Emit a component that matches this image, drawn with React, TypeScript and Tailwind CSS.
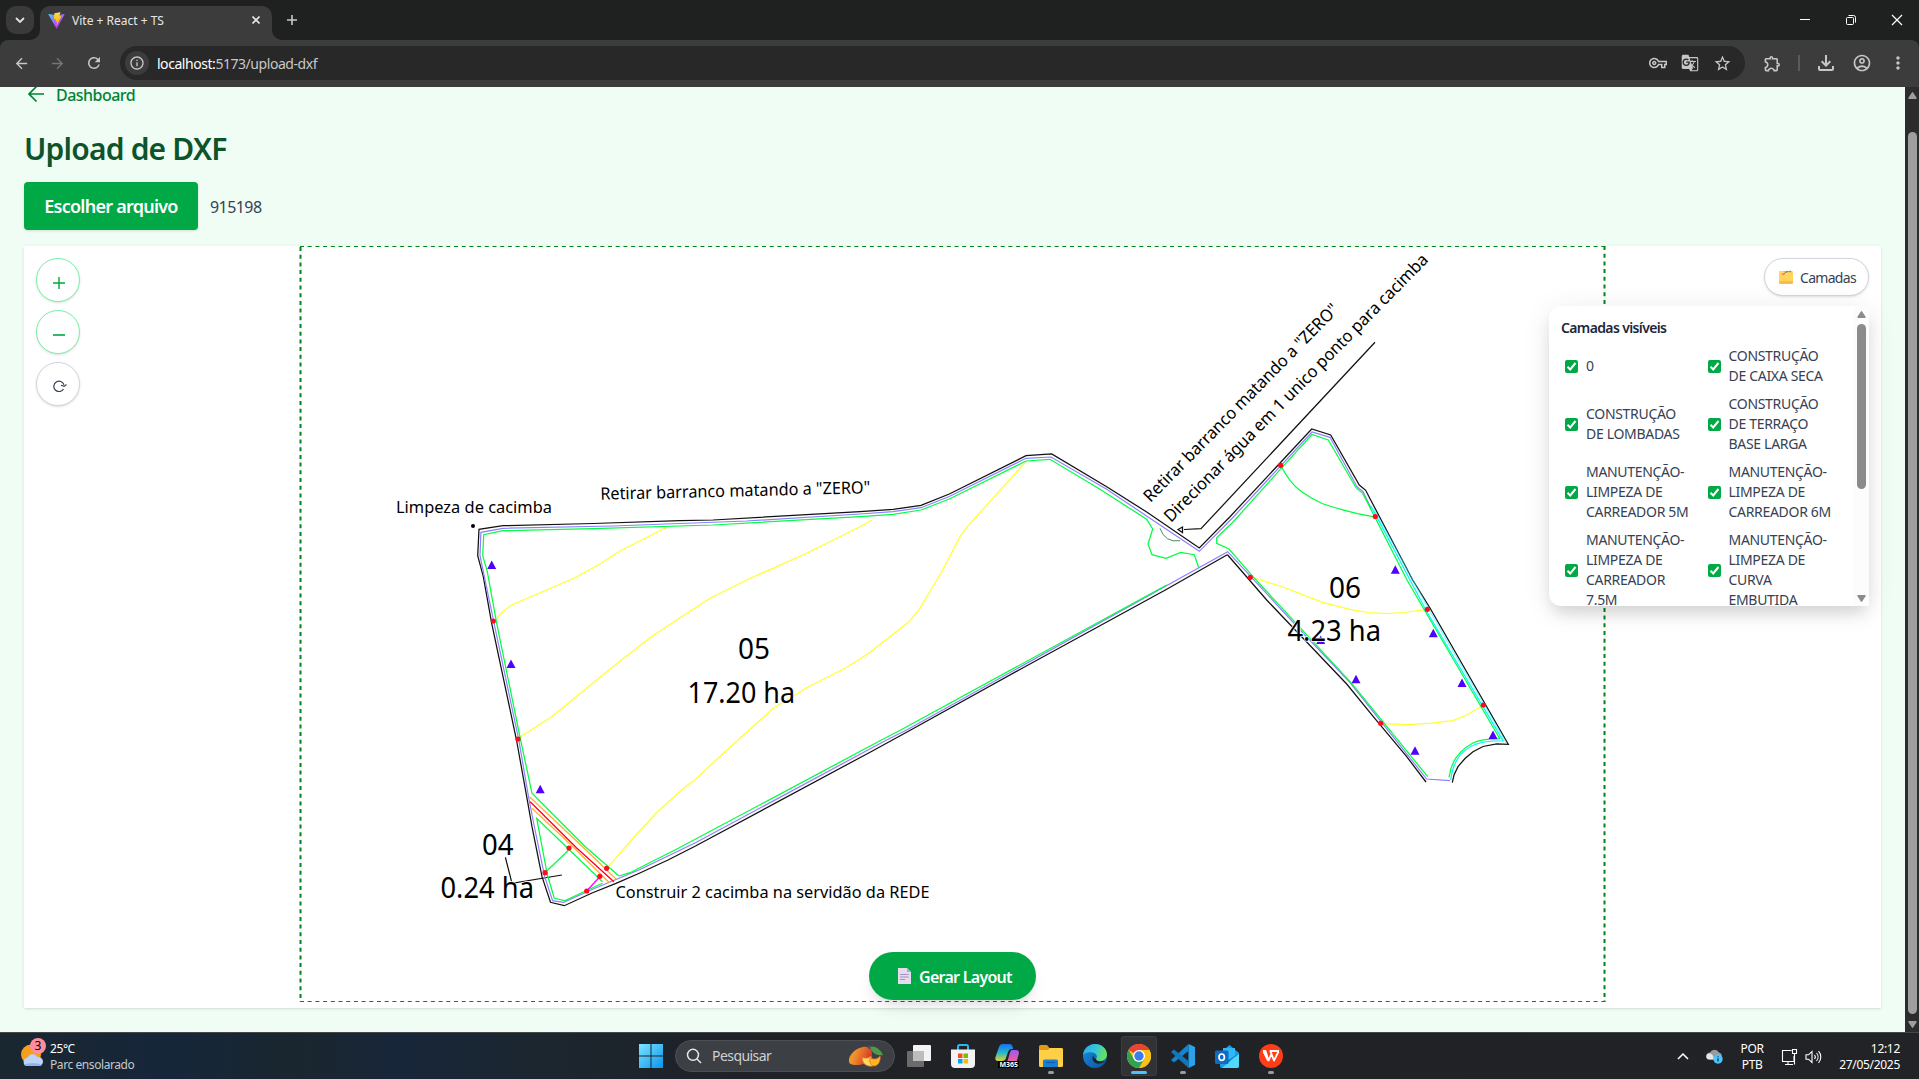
import React from "react";
import {
  MdArrowBack,
  MdArrowForward,
  MdRefresh,
  MdInfoOutline,
  MdOutlineVpnKey,
  MdGTranslate,
  MdStarOutline,
  MdOutlineExtension,
  MdOutlineFileDownload,
  MdOutlineAccountCircle,
  MdMoreVert,
} from "react-icons/md";

type Pt = [number, number];
const poly = (p: Pt[]) => p.map(([x, y]) => `${x},${y}`).join(" ");

/* ---------- Browser chrome ---------- */

function ViteLogo() {
  return (
    <svg width="17" height="17" viewBox="0 0 410 404" className="shrink-0">
      <defs>
        <linearGradient id="v1" x1="6" y1="33" x2="235" y2="344" gradientUnits="userSpaceOnUse">
          <stop stopColor="#41D1FF" />
          <stop offset="1" stopColor="#BD34FE" />
        </linearGradient>
        <linearGradient id="v2" x1="194" y1="9" x2="236" y2="293" gradientUnits="userSpaceOnUse">
          <stop stopColor="#FFEA83" />
          <stop offset="0.1" stopColor="#FFDD35" />
          <stop offset="1" stopColor="#FFA800" />
        </linearGradient>
      </defs>
      <path fill="url(#v1)" d="M399.6 59.5 215.6 388.5a10.5 10.5 0 0 1-17.9.1L10.6 59.5c-4.4-7.6 2.1-16.9 10.8-15.3l184.1 32.9c1.200.2 2.400.2 3.600 0L389.400 44.200c8.600-1.600 15.100 7.600 10.200 15.300Z" />
      <path fill="url(#v2)" d="M293 1.600 156.900 28.200a5 5 0 0 0-4 4.600l-8.400 141.400a5 5 0 0 0 6.100 5.200l37.900-8.700a5 5 0 0 1 6 5.900l-11.300 55.100a5 5 0 0 0 6.300 5.800l23.400-7.100a5 5 0 0 1 6.300 5.800l-17.900 86.600c-1.100 5.400 6.100 8.400 9.100 3.700l2-3.100 110.900-221.300a5 5 0 0 0-5.400-7.100l-39 7.500a5 5 0 0 1-5.700-6.300L298.600 7.900a5 5 0 0 0-5.600-6.300Z" />
    </svg>
  );
}

function TabStrip() {
  return (
    <div className="relative flex h-10 items-start bg-[#1f2120] pl-1.5">
      <div className="mt-1.5 flex size-7 items-center justify-center rounded-[10px] bg-[#3a3a3a]">
        <svg width="10" height="6" viewBox="0 0 10 6" fill="none" stroke="#e3e3e3" strokeWidth="1.8">
          <path d="M1 1l4 4 4-4" />
        </svg>
      </div>
      <div className="relative mt-1.5 ml-1.5 flex h-[34px] w-[232px] items-center rounded-t-[10px] bg-[#3c3c3c] pl-2">
        <svg className="absolute -left-2.5 bottom-0" width="10" height="10" viewBox="0 0 10 10">
          <path d="M10 0v10H0A10 10 0 0 0 10 0Z" fill="#3c3c3c" />
        </svg>
        <svg className="absolute -right-2.5 bottom-0" width="10" height="10" viewBox="0 0 10 10">
          <path d="M0 0v10h10A10 10 0 0 1 0 0Z" fill="#3c3c3c" />
        </svg>
        <div className="-mt-1.5 flex w-full items-center">
          <ViteLogo />
          <span className="ml-[7px] pt-px text-xs text-[#e6e6e6]">Vite + React + TS</span>
          <svg className="mr-3 ml-auto" width="8" height="8" viewBox="0 0 8 8" stroke="#e3e3e3" strokeWidth="1.6">
            <path d="M.5.5l7 7M7.500.5l-7 7" />
          </svg>
        </div>
      </div>
      <svg className="mt-[15px] ml-[15px]" width="10" height="10" viewBox="0 0 10 10" stroke="#c9c9c9" strokeWidth="1.6">
        <path d="M5 0v10M0 5h10" />
      </svg>
      <div className="mt-[14px] mr-[16px] ml-auto flex items-center gap-[34px]">
        <svg width="12" height="12" viewBox="0 0 12 12" stroke="#fff" strokeWidth="1">
          <path d="M1 5.500h10" />
        </svg>
        <svg width="12" height="12" viewBox="0 0 12 12" fill="none" stroke="#fff" strokeWidth="1">
          <rect x="1.500" y="3.500" width="7" height="7" rx="1" />
          <path d="M3.500 1.500h5a2 2 0 0 1 2 2v5" />
        </svg>
        <svg width="12" height="12" viewBox="0 0 12 12" stroke="#fff" strokeWidth="1.200">
          <path d="M1 1l10 10M11 1L1 11" />
        </svg>
      </div>
    </div>
  );
}

function Toolbar() {
  return (
    <div className="h-[47px] bg-[#1f2120]">
      <div className="flex h-full items-center rounded-t-[8px] bg-[#3c3c3c] pr-[11px] pb-[1px] pl-[13px] text-[#c7c7c7]">
        <MdArrowBack size={17} />
        <MdArrowForward size={17} className="ml-[19px] text-[#757575]" />
        <MdRefresh size={18} className="ml-[19px]" />
        <div className="ml-[17px] flex h-[34px] w-[1626px] items-center rounded-full bg-[#282828] pr-[13px] pl-[5px]">
          <div className="flex size-6 items-center justify-center rounded-full bg-[#3c3c3c]">
            <MdInfoOutline size={16} />
          </div>
          <div className="ml-2 pt-px text-sm tracking-[-0.032em]">
            <span className="text-white">localhost:</span>
            <span>5173/upload-dxf</span>
          </div>
          <MdOutlineVpnKey size={18} className="ml-auto" />
          <MdGTranslate size={18} className="ml-[14px]" />
          <MdStarOutline size={19} className="ml-[14px]" />
        </div>
        <MdOutlineExtension size={19} className="ml-[18px]" />
        <div className="ml-[16px] h-4 w-[2px] bg-[#5b5b5b]" />
        <MdOutlineFileDownload size={24} className="ml-[14px]" />
        <MdOutlineAccountCircle size={20} className="ml-[14px]" />
        <MdMoreVert size={20} className="ml-[16px]" />
      </div>
    </div>
  );
}

/* ---------- Map drawing ---------- */

const GREEN = "#00ff40";
const PURPLE = "#8f7fff";

const blackA: Pt[] = [[1227.7, 554.500], [1166.700, 589.300], [1019, 670], [910.700, 730], [871, 751.700], [695.500, 846], [668, 860], [640.400, 872.700], [616, 883.300], [592, 893], [564.300, 905.700], [550.500, 902.300], [542, 876.700], [532, 826.700], [526.700, 796.700], [516.500, 740], [491.700, 623.300], [483.300, 576.700], [477.700, 555.700], [479, 529.300], [503, 525.700], [593, 523.500], [680, 520.700], [713, 520], [860, 511.700], [893.300, 509.300], [921, 505.300], [949.300, 494], [1026, 455.700], [1051.700, 454], [1106.700, 486.700], [1146.700, 512], [1199.300, 548], [1230, 516.700], [1311.700, 429], [1330.700, 435], [1359.300, 485], [1365.700, 490.300], [1370.700, 500], [1412.700, 580], [1430, 608], [1508.300, 744.300], [1496.700, 744], [1483, 746.500], [1473, 751.700], [1465, 758.500], [1458, 766.700], [1454, 775], [1452.300, 782.700]];
const blackB: Pt[] = [[1227.700, 555], [1266.700, 600], [1300, 635], [1346.700, 684], [1373.300, 716.700], [1406.700, 756.700], [1426, 782]];
const purpleA: Pt[] = [[1450, 780.700], [1426.700, 779], [1350, 682.700], [1304, 634], [1227.700, 551.700], [906.700, 730], [886.600, 740], [695.500, 842.700], [640, 869.500], [613, 880.700], [592, 889.500], [563.600, 902.300], [552.600, 900.700], [544.700, 876.700], [533.600, 823], [528.500, 796.700], [518.800, 740], [494, 623], [480, 555.700], [480.900, 532.300], [503, 528.300], [613, 526], [746.700, 521], [860, 514], [893, 511.700], [921, 507.700], [949.300, 496.500], [1026, 458.300], [1051, 457], [1106.700, 489.300], [1199.300, 551.300], [1232, 518.500], [1312, 432], [1330, 437.300], [1357, 486.700], [1363, 491.700], [1371, 508]];
const greenTop: Pt[] = [[619, 876], [585.300, 846.700], [532, 793.300], [520.600, 740], [496.700, 623.300], [487.300, 571.700], [482.700, 555.700], [483.700, 534.700], [503, 530.700], [593, 528.700], [713, 525], [860, 516.700], [893, 514.300], [921, 510], [949.300, 499], [1026, 461], [1050, 459.300], [1100, 489.300], [1146.700, 519.300], [1152.700, 529], [1148, 544], [1152, 554.700], [1166, 558.300], [1180.700, 552.300], [1194.300, 554.700], [1198.700, 567.700]];
const greenLow: Pt[] = [[1166.700, 585], [900.700, 730], [881.400, 740], [678.300, 848.300], [630, 872.700], [619, 876]];
const green04: Pt[] = [[602.500, 883.300], [585, 891.300], [564.600, 900.700], [554.300, 898.300], [547.400, 875], [536.700, 818.300], [568.800, 849.300], [602.500, 881.700]];
const green06: Pt[] = [[1427.700, 776.700], [1351.700, 683.300], [1253, 576.700], [1229, 549], [1216.700, 543.300], [1216.700, 537.700], [1233.300, 521.700], [1282.700, 466.700], [1312, 434.500], [1328.300, 440], [1356, 487.700], [1362.700, 493.300], [1407, 580], [1423.300, 608], [1500, 739]];

const yellows: Pt[][] = [
  [[496.700, 618.300], [503, 611.500], [511.700, 605], [571.700, 579.300], [596.700, 566], [620, 551], [666.700, 527.300]],
  [[520, 737.300], [551.700, 716.700], [613, 666.700], [650, 637.700], [676.700, 620], [710, 598.300], [746.700, 580], [806.700, 553.300], [860, 526.700], [871.700, 520.300]],
  [[607.700, 867.300], [635, 836], [657.600, 811.700], [683.400, 788.300], [695.500, 779.300], [715, 761], [738, 740], [773.300, 708.300], [806.700, 687.700], [845, 668.300], [860, 659], [870, 652.300], [908.300, 622.300], [918.300, 611], [941.700, 571.700], [960, 536.700], [966.700, 527.300], [1026, 461.700]],
  [[1255, 578.300], [1283, 587], [1323, 602.700], [1350, 609.300], [1368, 612.500], [1386.700, 613.500], [1404, 612.500], [1427, 609.300]],
  [[1382.700, 723.700], [1406.700, 724.700], [1432, 723.200], [1453, 720.700], [1466.700, 715], [1481.700, 706]],
];

const dots: Pt[] = [[569, 848], [606.600, 868.300], [599.800, 876.300], [586.700, 891], [545, 872.700], [493.300, 621], [518, 739], [1280.700, 465.300], [1250.300, 577.300], [1375.300, 516.500], [1427.300, 609.300], [1483.300, 705], [1380.700, 723.300]];
const triangles: Pt[] = [[491.700, 565], [511, 664], [540.200, 789.300], [1395.300, 569.700], [1433.300, 633.300], [1462, 683], [1493, 735], [1415, 750.700], [1356, 679.300], [1320.700, 640]];

interface Label {
  text: string;
  x: number;
  y: number;
  size: number;
  width: number;
  angle?: number;
}

const labels: Label[] = [
  { text: "05", x: 738, y: 659, size: 28.5, width: 32 },
  { text: "17.20 ha", x: 687.500, y: 702.500, size: 28.5, width: 107.500 },
  { text: "06", x: 1329, y: 597.500, size: 28.5, width: 32 },
  { text: "4.23 ha", x: 1287.500, y: 640.500, size: 28.5, width: 93.500 },
  { text: "04", x: 482, y: 855, size: 28.5, width: 31.500 },
  { text: "0.24 ha", x: 440.500, y: 898, size: 28.5, width: 93.500 },
  { text: "Limpeza de cacimba", x: 396, y: 513, size: 17, width: 156 },
  { text: 'Retirar barranco matando a "ZERO"', x: 600.500, y: 499.800, size: 17, width: 270, angle: -1.400 },
  { text: "Construir 2 cacimba na servidão da REDE", x: 615.500, y: 898, size: 17, width: 314 },
  { text: 'Retirar barranco matando a "ZERO"', x: 1150.500, y: 503, size: 17, width: 270, angle: -45.500 },
  { text: "Direcionar água em 1 unico ponto para cacimba", x: 1171, y: 523, size: 17, width: 368, angle: -45.450 },
];

function MapDrawing() {
  return (
    <svg className="block h-full w-full" viewBox="24 246 1857 762" fill="none">
      <g stroke="#00851c" strokeDasharray="4 3.700">
        <path d="M300 246.500H1606M300 1001.500H1606" strokeWidth="1" />
        <path d="M300.500 247V1002M1604.500 246V1002" strokeWidth="2" />
      </g>
      <g stroke="#ffff2e" strokeWidth="1.250">
        {yellows.map((p, i) => (
          <polyline key={i} points={poly(p)} />
        ))}
      </g>
      <g stroke="#111" strokeWidth="1.250">
        <polyline points={poly(blackA)} />
        <polyline points={poly(blackB)} />
        <path d="M1375 342.300 1201 528.700 1184 529.500M1178 529.500l4.500-2.500v5.500zM505.400 857.300 512 883.300 561.900 875" />
      </g>
      <polyline points={poly(purpleA)} stroke={PURPLE} strokeWidth="1.200" />
      <g stroke={GREEN} strokeWidth="1.250">
        <polyline points={poly(greenTop)} />
        <polyline points={poly(greenLow)} />
        <polyline points={poly(green04)} />
        <polyline points={poly(green06)} />
        <path d="M568.800 850 546 871.700" />
        <path d="M1281.700 467.300Q1290 483 1300 490.500Q1310 498 1322 503.500Q1350 513 1375 517" />
        <path d="M1500 739Q1483 738.500 1473 743Q1452 754 1449 777.300" />
      </g>
      <g stroke="#00f6ff" strokeWidth="1.200">
        <path d="M1371 506 1426.700 611.500 1503.300 741H1493Q1455 743 1450.700 780" />
        <path d="M1374 509 1429 609.500 1506 742.500" opacity="0.500" />
      </g>
      <path d="M1160 528.300Q1165 543 1180 540.700" stroke="#3f8f52" />
      <g stroke="#ffb02e" strokeWidth="1.250">
        <polyline points="529.500,796.700 581.800,846 616.300,879.300" />
        <polyline points="532,808.300 570,844 609.400,882.700" />
      </g>
      <polyline points="530.200,801.700 576.700,848 613.900,881.700" stroke="#ff0020" strokeWidth="1.300" />
      <path d="M599.800 876.700 586.700 891" stroke="#ff00ff" strokeWidth="1.300" />
      {dots.map(([x, y], i) => (
        <circle key={i} cx={x} cy={y} r="2.600" fill="#ff0a1e" />
      ))}
      <circle cx="473" cy="526" r="2" fill="#000" />
      {triangles.map(([x, y], i) => (
        <path key={i} d={`M${x} ${y - 4.500}l4.500 8.500h-9z`} fill="#4f00ff" />
      ))}
      {labels.map((l, i) => (
        <text
          key={i}
          transform={`translate(${l.x} ${l.y}) rotate(${l.angle ?? 0})`}
          fontSize={l.size}
          textLength={l.width}
          lengthAdjust="spacingAndGlyphs"
          fill="#000"
          stroke="#fff"
          strokeWidth={l.size > 20 ? 1.5 : 0}
          paintOrder="stroke"
        >
          {l.text}
        </text>
      ))}
    </svg>
  );
}

/* ---------- Page ---------- */

const layers: [string[], string[]][] = [
  [["0"], ["CONSTRUÇÃO", "DE CAIXA SECA"]],
  [["CONSTRUÇÃO", "DE LOMBADAS"], ["CONSTRUÇÃO", "DE TERRAÇO", "BASE LARGA"]],
  [["MANUTENÇÃO-", "LIMPEZA DE", "CARREADOR 5M"], ["MANUTENÇÃO-", "LIMPEZA DE", "CARREADOR 6M"]],
  [["MANUTENÇÃO-", "LIMPEZA DE", "CARREADOR", "7.5M"], ["MANUTENÇÃO-", "LIMPEZA DE", "CURVA", "EMBUTIDA"]],
];

function LayerItem({ lines }: { lines: string[] }) {
  return (
    <label className="flex w-[142.5px] items-center gap-2 pl-1">
      <span className="flex size-[13px] shrink-0 items-center justify-center rounded-[2px] bg-[#00a846]">
        <svg width="11" height="11" viewBox="0 0 11 11" fill="none" stroke="#fff" strokeWidth="2">
          <path d="M1.500 5.800 4.200 8.500 9.500 2" />
        </svg>
      </span>
      <span className="text-sm leading-5 tracking-[-0.022em] whitespace-nowrap text-gray-700">
        {lines.map((l) => (
          <span key={l} className="block">
            {l}
          </span>
        ))}
      </span>
    </label>
  );
}

function Arrow({ down, color }: { down?: boolean; color: string }) {
  return (
    <svg width="9" height="7" viewBox="0 0 9 7" className={down ? "rotate-180" : ""}>
      <path d="M4.500.8 8 6.200H1z" fill={color} stroke={color} strokeWidth="1.400" strokeLinejoin="round" />
    </svg>
  );
}

function LayersPanel() {
  return (
    <div className="mt-2.5 flex h-[300px] w-80 overflow-hidden rounded-l-xl bg-white shadow-[0_10px_15px_-3px_rgba(0,0,0,0.12),0_4px_30px_-2px_rgba(0,0,0,0.10)]">
      <div className="flex-1 pt-3 pl-3">
        <h2 className="text-sm leading-5 font-semibold tracking-[-0.045em] text-gray-800">Camadas visíveis</h2>
        <div className="mt-2 flex flex-col gap-2">
          {layers.map(([a, b], i) => (
            <div key={i} className="flex">
              <LayerItem lines={a} />
              <LayerItem lines={b} />
            </div>
          ))}
        </div>
      </div>
      <div className="flex w-[15px] flex-col items-center bg-[#fcfcfc] pt-[5px] pb-1">
        <Arrow color="#8b8b8b" />
        <div className="mt-1.5 h-[165px] w-[9px] rounded-full bg-[#8b8b8b]" />
        <div className="mt-auto flex">
          <Arrow down color="#8b8b8b" />
        </div>
      </div>
    </div>
  );
}

function ZoomButton({ children, gray }: { children: React.ReactNode; gray?: boolean }) {
  return (
    <button
      className={
        gray
          ? "flex size-11 items-center justify-center rounded-full border border-gray-300 bg-white text-gray-700 shadow"
          : "flex size-11 items-center justify-center rounded-full border border-green-300 bg-white text-green-600 shadow"
      }
    >
      {children}
    </button>
  );
}

function UploadPage() {
  return (
    <main className="flex h-[945px] overflow-hidden bg-green-50">
      <div className="w-[1905px] px-6">
        <a className="-mt-[5px] flex h-6 items-center gap-[11px] pl-1 text-green-700">
          <svg width="17" height="18" viewBox="0 0 17 18" fill="none" stroke="currentColor" strokeWidth="1.700">
            <path d="M16 9H1M8.500 1.500 1 9l7.500 7.500" />
          </svg>
          <span className="pt-px text-base font-medium tracking-[-0.033em]">Dashboard</span>
        </a>
        <h1 className="mt-[25px] h-9 text-3xl leading-9 font-semibold tracking-[-0.027em] text-green-900">Upload de DXF</h1>
        <div className="mt-[15px] flex items-center gap-3">
          <button className="h-12 w-[174px] rounded bg-[#00a846] text-lg font-semibold tracking-[-0.042em] whitespace-nowrap text-white shadow">
            Escolher arquivo
          </button>
          <span className="pt-px text-base tracking-[-0.035em] text-gray-700">915198</span>
        </div>
        <div className="relative mt-4 h-[762px] w-[1857px] bg-white shadow">
          <MapDrawing />
          <div className="absolute top-3 left-3 flex flex-col gap-2">
            <ZoomButton>
              <svg width="12" height="12" viewBox="0 0 12 12" stroke="currentColor" strokeWidth="1.400" className="mt-[5px] ml-px">
                <path d="M6 0v12M0 6h12" />
              </svg>
            </ZoomButton>
            <ZoomButton>
              <svg width="12" height="12" viewBox="0 0 12 12" stroke="currentColor" strokeWidth="1.600" className="mt-[5px] ml-px">
                <path d="M0 6h12" />
              </svg>
            </ZoomButton>
            <ZoomButton gray>
              <svg width="14" height="12" viewBox="0 0 14 12" fill="none" stroke="currentColor" strokeWidth="1.200" className="mt-1 ml-[3px]">
                <path d="M10.500 9A5.200 5.200 0 1 1 11 4.800M8 5.200l3.200 1.200L13.500 4.500" />
              </svg>
            </ZoomButton>
          </div>
          <div className="absolute top-3 right-3 flex flex-col items-end">
            <button className="flex h-[38px] w-[105px] items-center rounded-full border border-gray-300 bg-white pl-[14px] shadow">
              <svg width="14" height="14" viewBox="0 0 14 14">
                <rect x="0" y="1" width="14" height="13" rx="1.500" fill="#ffb84d" />
                <path d="M1 1h3l1.500 1.500H13a1 1 0 0 1 1 1V11H0V2a1 1 0 0 1 1-1z" fill="#ffd65c" />
                <path d="M3 4.500 6 3.500" stroke="#f2506e" strokeWidth="1.200" />
                <path d="M6 2.500 9 1.300" stroke="#3a8fe8" strokeWidth="1.200" />
                <path d="M9.500 1.800 12 1" stroke="#3fae6b" strokeWidth="1.200" />
              </svg>
              <span className="ml-[7px] pt-px text-sm tracking-[-0.05em] text-gray-700">Camadas</span>
            </button>
            <LayersPanel />
          </div>
          <button className="absolute bottom-2 left-[845px] flex h-12 w-[167px] items-center rounded-full bg-[#00a846] pl-[29px] text-white shadow-lg">
            <svg width="13" height="16" viewBox="0 0 13 16">
              <path d="M0 0h9l4 4v12H0z" fill="#e4dbee" />
              <path d="M9 0v4h4z" fill="#b7a8cb" />
              <path d="M2 6.500h8.500M2 9h8.500M2 11.500h5" stroke="#a493bb" strokeWidth="1" />
            </svg>
            <span className="ml-2 pt-px text-base font-semibold tracking-[-0.045em] whitespace-nowrap">Gerar Layout</span>
          </button>
        </div>
      </div>
      <div className="flex w-[14px] flex-col items-center bg-[#2c2c2c] pt-[5px] pb-1">
        <Arrow color="#9f9f9f" />
        <div className="mt-[33px] h-[882px] w-[9px] rounded-full bg-[#9f9f9f]" />
        <div className="mt-auto flex">
          <Arrow down color="#9f9f9f" />
        </div>
      </div>
    </main>
  );
}

/* ---------- Taskbar ---------- */

function TaskSlot({ children, dot, active }: { children: React.ReactNode; dot?: boolean; active?: boolean }) {
  return (
    <div className="relative flex h-10 w-11 items-center justify-center">
      {active && <span className="absolute inset-y-0 left-1 w-9 rounded bg-[#303236] ring-1 ring-[#3b3d41] ring-inset" />}
      <span className="relative">{children}</span>
      {dot && <span className="absolute bottom-0.5 h-[3px] w-1.5 rounded-full bg-[#9a9c9f]" />}
      {active && <span className="absolute bottom-0.5 h-[3px] w-4 rounded-full bg-[#4cc2ff]" />}
    </div>
  );
}

function Mango() {
  return (
    <svg width="36" height="22" viewBox="0 0 36 22">
      <defs>
        <linearGradient id="mg" x1="0" y1="0" x2="1" y2="0.300">
          <stop stopColor="#f2b01f" />
          <stop offset="0.400" stopColor="#f08a2a" />
          <stop offset="1" stopColor="#d43a2a" />
        </linearGradient>
      </defs>
      <path d="M1 17C0 10 8 3 15 2c6-1 10 3 9 8-1 6-7 10-14 10-5 0-8.500-.5-9-3z" fill="url(#mg)" />
      <path d="M22 2c5-2 11 3 13 8-5 1-11-1-13-8z" fill="#4f9a4a" />
      <path d="M21 0v4" stroke="#6b4b2a" strokeWidth="1.200" />
      <path d="M14 12c3 2 7 1 9-1l2 10c-5 1-11-1-11-9z" fill="#ffd75a" stroke="#e8642a" strokeWidth="0.800" />
      <path d="M22 13c5 2 8 1 10-2 1 5-2 10-6 10-3 0-5-4-4-8z" fill="#ffb81f" stroke="#e8642a" strokeWidth="0.800" />
    </svg>
  );
}

function Taskbar() {
  return (
    <footer className="relative flex h-[47px] items-center border-t border-[#45484b] bg-[linear-gradient(90deg,#1a2730_0px,#16263a_170px,#1a262f_300px,#18263a_400px,#1c262e_560px,#1e2229_700px,#202225_900px,#222326_1919px)]">
      <div className="flex w-[637px] items-center pl-[21px]">
        <div className="relative h-6 w-6">
          <svg width="24" height="24" viewBox="0 0 24 24">
            <circle cx="10" cy="10.500" r="10" fill="#f59f1b" />
            <path d="M6 22a4.200 4.200 0 0 1 .5-8.300 5.500 5.500 0 0 1 10-.5A4.500 4.500 0 0 1 18.500 22z" fill="#bcd4f8" />
            <path d="M3 20.500q9-3 18 0-1 1.500-2.500 1.500H6q-2 0-3-1.500z" fill="#8fb3ee" />
          </svg>
          <span className="absolute -top-[6px] left-[9px] flex size-4 items-center justify-center rounded-full bg-[#ff8d9b] text-xs leading-none text-black">
            3
          </span>
        </div>
        <div className="ml-[5px] pt-px text-xs leading-4 tracking-[-0.035em]">
          <div className="text-white">25°C</div>
          <div className="text-[#c3c8cc]">Parc ensolarado</div>
        </div>
      </div>

      <div className="flex items-center">
        <svg width="24" height="24" viewBox="0 0 24 24" className="ml-[2px]">
          <defs>
            <linearGradient id="wn" x1="0" y1="0" x2="1" y2="1">
              <stop stopColor="#7be6ff" />
              <stop offset="1" stopColor="#0a93ef" />
            </linearGradient>
          </defs>
          <path d="M0 0h11.500v11.500H0zM12.500 0H24v11.500H12.500zM0 12.500h11.500V24H0zM12.500 12.500H24V24H12.500z" fill="url(#wn)" />
        </svg>
        <div className="ml-3 flex h-8 w-[220px] items-center rounded-full border border-[#4c4f53] bg-[#3c3f43] pr-2.5 pl-[10px]">
          <svg width="16" height="16" viewBox="0 0 16 16" fill="none" stroke="#e8e8e8" strokeWidth="1.500">
            <circle cx="7" cy="6.800" r="5.500" />
            <path d="M11 11l4 4" />
          </svg>
          <span className="ml-2.5 text-sm tracking-[-0.04em] text-[#cfd0d1]">Pesquisar</span>
          <div className="ml-auto">
            <Mango />
          </div>
        </div>
        <div className="ml-[2px] flex items-center">
          <TaskSlot>
            <svg width="24" height="24" viewBox="0 0 24 24">
              <rect x="6" y="1" width="18" height="16" rx="1" fill="#f3f3f3" />
              <rect x="0" y="7" width="17" height="16" rx="1" fill="#6b6b6b" />
              <rect x="6" y="7" width="11" height="10" fill="#bdbdbd" />
            </svg>
          </TaskSlot>
          <TaskSlot>
            <svg width="24" height="24" viewBox="0 0 24 24">
              <path d="M7 7V2.500A1.500 1.500 0 0 1 8.500 1h7A1.500 1.500 0 0 1 17 2.500V7" fill="none" stroke="#2fb4f0" strokeWidth="2" />
              <path d="M0 5.500h24V20a4 4 0 0 1-4 4H4a4 4 0 0 1-4-4z" fill="#f3f3f3" />
              <path d="M7 9.500h4.500V14H7z" fill="#f25022" />
              <path d="M12.500 9.500H17V14h-4.500z" fill="#7fba00" />
              <path d="M7 15h4.500v4.500H7z" fill="#00a4ef" />
              <path d="M12.500 15H17v4.500h-4.500z" fill="#ffb900" />
            </svg>
          </TaskSlot>
          <TaskSlot>
            <div className="relative size-6">
              <svg width="24" height="24" viewBox="0 0 24 24">
                <defs>
                  <linearGradient id="cpA" x1="0" y1="0" x2="0" y2="1">
                    <stop stopColor="#1a6ff0" />
                    <stop offset="0.500" stopColor="#22b8c9" />
                    <stop offset="1" stopColor="#e8d02c" />
                  </linearGradient>
                  <linearGradient id="cpB" x1="0" y1="0" x2="0" y2="1">
                    <stop stopColor="#9a5bf2" />
                    <stop offset="0.600" stopColor="#e85aa8" />
                    <stop offset="1" stopColor="#ff9a4d" />
                  </linearGradient>
                </defs>
                <path d="M7.500 0H15q2 0 2.500 2.500L18 5h-2q-2 0-3 3l-2 6q-1 3-4 3H3q-3.500 0-2.500-4L4 3q1-3 3.500-3z" fill="url(#cpA)" />
                <path d="M17 6h4q3.500 0 2.800 4L21.500 18q-1 4-4 4H9q2 0 3-3l2.500-9q1-4 2.500-4z" fill="url(#cpB)" />
              </svg>
              <span className="absolute right-0 bottom-0 bg-black px-px text-[7px] leading-[7px] font-bold text-white">M365</span>
            </div>
          </TaskSlot>
          <TaskSlot dot>
            <svg width="24" height="22" viewBox="0 0 24 22">
              <path d="M0 1.500A1.500 1.500 0 0 1 1.500 0H8l2.500 3H22a2 2 0 0 1 2 2v15H0z" fill="#e09a14" />
              <path d="M0 5h9l2-2h11.500A1.500 1.500 0 0 1 24 4.500v16a1.500 1.500 0 0 1-1.500 1.500h-21A1.500 1.500 0 0 1 0 20.500z" fill="#ffcf48" />
              <path d="M4 22v-6a1.500 1.500 0 0 1 1.500-1.500h12A1.500 1.500 0 0 1 19 16v6z" fill="#1a7fd4" />
              <path d="M7 17.500h9" stroke="#0d5ca8" strokeWidth="1.200" />
            </svg>
          </TaskSlot>
          <TaskSlot>
            <svg width="24" height="24" viewBox="0 0 24 24">
              <defs>
                <linearGradient id="edA" x1="0" y1="0" x2="1" y2="0.300">
                  <stop stopColor="#2aa6e8" />
                  <stop offset="0.600" stopColor="#35c9d8" />
                  <stop offset="1" stopColor="#67e05c" />
                </linearGradient>
                <linearGradient id="edB" x1="0" y1="0" x2="1" y2="1">
                  <stop stopColor="#1b8fe0" />
                  <stop offset="1" stopColor="#0c50a0" />
                </linearGradient>
              </defs>
              <circle cx="12" cy="12" r="12" fill="url(#edB)" />
              <path d="M0 11C.5 5 5.500 0 12 0c7 0 12 5 12 10.500 0 4-3 6.500-7 6.500-3 0-4.500-1-4-2 1.500-1.500 1.500-6-4-6.500C5 8 1.500 9 0 11z" fill="url(#edA)" />
              <path d="M10 11.500c-2 5 2 9 7 8 2.500-.5 4-1.500 5-2.500-4 1.200-9 .5-9-2-1 0-2-1-3-3.500z" fill="#202225" />
            </svg>
          </TaskSlot>
          <TaskSlot active>
            <svg width="24" height="24" viewBox="0 0 24 24">
              <circle cx="12" cy="12" r="12" fill="#fbc116" />
              <path d="M12 12 1.600 6A12 12 0 0 1 22.400 6z" fill="#ea4335" />
              <path d="M12 12V6h10.400A12 12 0 0 1 12 24l5-9z" fill="#fbc116" />
              <path d="M12 24A12 12 0 0 1 1.600 6l5.200 9L12 17l5.200-2z" fill="#31a350" />
              <circle cx="12" cy="12" r="6" fill="#fff" />
              <circle cx="12" cy="12" r="4.700" fill="#3b7ded" />
            </svg>
          </TaskSlot>
          <TaskSlot dot>
            <svg width="24" height="24" viewBox="0 0 24 24">
              <path d="M17.500 0v24L24 21V3z" fill="#29a3ee" />
              <path d="M17.500 0v7L3 18.500 0 16z" fill="#1583cf" />
              <path d="M17.500 24v-7L3 5.500 0 8z" fill="#1177bb" />
            </svg>
          </TaskSlot>
          <TaskSlot>
            <svg width="24" height="24" viewBox="0 0 24 24">
              <path d="M5 9 14.500 1 24 9v13a2 2 0 0 1-2 2H7a2 2 0 0 1-2-2z" fill="#1e9be8" />
              <path d="M8 4h12v13H8z" fill="#2fb8f5" />
              <path d="M24 10v12a2 2 0 0 1-2 2H7z" fill="#4fd8f8" />
              <path d="M24 9 12 19 5 12l9 4z" fill="#0f5fb5" />
              <rect x="0" y="6.500" width="13.500" height="13.500" rx="1.500" fill="#0f6cc4" />
              <ellipse cx="6.700" cy="13.200" rx="2.700" ry="3.200" fill="none" stroke="#fff" strokeWidth="1.700" />
            </svg>
          </TaskSlot>
          <TaskSlot dot>
            <svg width="24" height="24" viewBox="0 0 24 24">
              <circle cx="12" cy="12" r="12" fill="#ff3d17" />
              <path d="M4 7h2.500L9.500 16.500 12.500 10l-1.200-3H20M19.500 7.500 15 16.500 12.500 10M4.500 7.500l4.500 9" fill="none" stroke="#fff" strokeWidth="1.800" strokeLinejoin="round" />
            </svg>
          </TaskSlot>
        </div>
      </div>

      <div className="mr-[19px] ml-auto flex items-center pt-px text-xs leading-4 tracking-[-0.025em] text-white">
        <svg width="12" height="7" viewBox="0 0 12 7" fill="none" stroke="#fff" strokeWidth="1.500">
          <path d="M1 6l5-5 5 5" />
        </svg>
        <svg width="17" height="15" viewBox="0 0 17 15" className="ml-[17px]">
          <path d="M4 10.500a3.500 3.500 0 0 1 0-7 5 5 0 0 1 9 0 3.600 3.600 0 0 1 0 7z" fill="#9b9b9b" />
          <path d="M3 10.500a3 3 0 0 1 .5-6Q7 4 8 10.500z" fill="#e6e6e6" />
          <circle cx="12" cy="10" r="4.700" fill="#4cc2ff" />
          <path d="M12 9.300v3.200M12 7.200v1.100" stroke="#12324a" strokeWidth="1.200" />
        </svg>
        <div className="ml-[17px] w-6 text-center">
          <div>POR</div>
          <div>PTB</div>
        </div>
        <svg width="17" height="16" viewBox="0 0 17 16" fill="none" stroke="#fff" strokeWidth="1.100" className="ml-[17px]">
          <path d="M10.500 1.500H1.500v11h11.500V7M4 15.500h8M7 12.500v3M11.500.5h4v4h-4zM13.500 4.500v11" />
        </svg>
        <svg width="17" height="14" viewBox="0 0 17 14" fill="none" stroke="#fff" strokeWidth="1.100" className="ml-[7px]">
          <path d="M1 4.800h2.500L7 1.500v11L3.500 9.200H1zM9.500 5a3 3 0 0 1 0 4M11.500 3a6 6 0 0 1 0 8M13.500 1.200a8.500 8.500 0 0 1 0 11.600" />
        </svg>
        <div className="ml-[17px] text-right">
          <div>12:12</div>
          <div>27/05/2025</div>
        </div>
      </div>
    </footer>
  );
}

export default function App() {
  return (
    <div className="flex h-[1079px] w-[1919px] flex-col overflow-hidden font-['Noto_Sans','Open_Sans',sans-serif]">
      <TabStrip />
      <Toolbar />
      <UploadPage />
      <Taskbar />
    </div>
  );
}
